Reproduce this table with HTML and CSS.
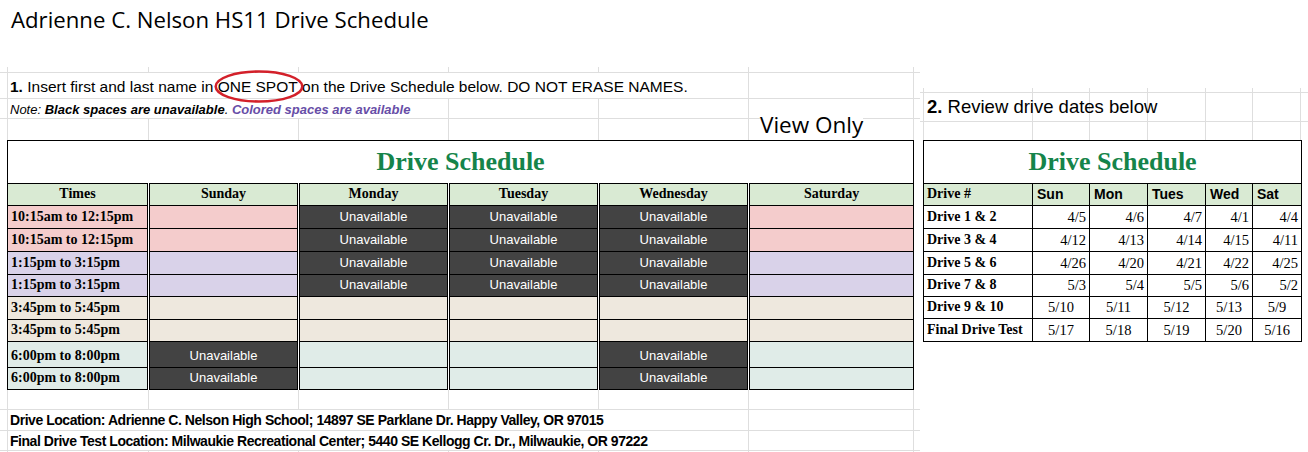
FILE: index.html
```html
<!DOCTYPE html>
<html lang="en">
<head>
<meta charset="utf-8">
<title>Adrienne C. Nelson HS11 Drive Schedule</title>
<link rel="stylesheet" href="styles.css">
</head>
<body>
<header class="doc-head">
  <h1 class="doc-title">Adrienne C. Nelson HS11 Drive Schedule</h1>
</header>
<main class="sheets">
  <section class="sheet sheet-left">
    <div class="srow strip"></div>
    <div class="srow step-row">
      <p class="step cover-wide"><b>1.</b> Insert first and last name in <span class="spot">ONE SPOT<svg class="ring" viewBox="0 0 90 33" width="90" height="33" aria-hidden="true"><ellipse cx="45" cy="16.5" rx="43.3" ry="15" fill="none" stroke="#d3202a" stroke-width="2.6"/></svg></span> on the Drive Schedule below. DO NOT ERASE NAMES.</p>
    </div>
    <div class="srow note-row">
      <p class="note cover-note"><i>Note: <b>Black spaces are unavailable</b>. <b class="purple">Colored spaces are available</b></i></p>
    </div>
    <div class="srow view-row"><span class="view-only">View Only</span></div>

    <table class="sched">
      <colgroup>
        <col class="c-times"><col class="c-day"><col class="c-day"><col class="c-day"><col class="c-day"><col class="c-sat">
      </colgroup>
      <tr class="t-title"><td colspan="6">Drive Schedule</td></tr>
      <tr class="t-head"><th>Times</th><th>Sunday</th><th>Monday</th><th>Tuesday</th><th>Wednesday</th><th>Saturday</th></tr>
      <tr class="pink"><th>10:15am to 12:15pm</th><td></td><td class="na">Unavailable</td><td class="na">Unavailable</td><td class="na">Unavailable</td><td></td></tr>
      <tr class="pink"><th>10:15am to 12:15pm</th><td></td><td class="na">Unavailable</td><td class="na">Unavailable</td><td class="na">Unavailable</td><td></td></tr>
      <tr class="lav"><th>1:15pm to 3:15pm</th><td></td><td class="na">Unavailable</td><td class="na">Unavailable</td><td class="na">Unavailable</td><td></td></tr>
      <tr class="lav h22"><th>1:15pm to 3:15pm</th><td></td><td class="na">Unavailable</td><td class="na">Unavailable</td><td class="na">Unavailable</td><td></td></tr>
      <tr class="beige"><th>3:45pm to 5:45pm</th><td></td><td></td><td></td><td></td><td></td></tr>
      <tr class="beige h22"><th>3:45pm to 5:45pm</th><td></td><td></td><td></td><td></td><td></td></tr>
      <tr class="mint tall"><th>6:00pm to 8:00pm</th><td class="na">Unavailable</td><td></td><td></td><td class="na">Unavailable</td><td></td></tr>
      <tr class="mint h22"><th>6:00pm to 8:00pm</th><td class="na">Unavailable</td><td></td><td></td><td class="na">Unavailable</td><td></td></tr>
    </table>

    <div class="srow gap-row"></div>
    <div class="srow foot-row"><p class="foot cover-wide">Drive Location: Adrienne C. Nelson High School; 14897 SE Parklane Dr. Happy Valley, OR 97015</p></div>
    <div class="srow foot-row last"><p class="foot cover-wide">Final Drive Test Location: Milwaukie Recreational Center; 5440 SE Kellogg Cr. Dr., Milwaukie, OR 97222</p></div>
  </section>

  <section class="sheet sheet-right">
    <div class="srow rstrip"></div>
    <div class="srow review-row"><p class="review"><b>2.</b> Review drive dates below</p></div>
    <div class="srow rgap"></div>
    <table class="dates">
      <colgroup>
        <col class="d-name"><col class="d-57"><col class="d-58"><col class="d-58"><col class="d-47"><col class="d-49">
      </colgroup>
      <tr class="t-title"><td colspan="6">Drive Schedule</td></tr>
      <tr class="d-head"><th class="serif">Drive #</th><th>Sun</th><th>Mon</th><th>Tues</th><th>Wed</th><th>Sat</th></tr>
      <tr><th>Drive 1 &amp; 2</th><td>4/5</td><td>4/6</td><td>4/7</td><td>4/1</td><td>4/4</td></tr>
      <tr><th>Drive 3 &amp; 4</th><td>4/12</td><td>4/13</td><td>4/14</td><td>4/15</td><td>4/11</td></tr>
      <tr><th>Drive 5 &amp; 6</th><td>4/26</td><td>4/20</td><td>4/21</td><td>4/22</td><td>4/25</td></tr>
      <tr class="h22"><th>Drive 7 &amp; 8</th><td>5/3</td><td>5/4</td><td>5/5</td><td>5/6</td><td>5/2</td></tr>
      <tr class="mid h22"><th>Drive 9 &amp; 10</th><td>5/10</td><td>5/11</td><td>5/12</td><td>5/13</td><td>5/9</td></tr>
      <tr class="mid"><th>Final Drive Test</th><td>5/17</td><td>5/18</td><td>5/19</td><td>5/20</td><td>5/16</td></tr>
    </table>
  </section>
</main>
</body>
</html>
```

FILE: styles.css
```css
* { box-sizing: border-box; margin: 0; padding: 0; }

html, body { background: #fff; }

body {
  width: 1308px;
  height: 452px;
  overflow: hidden;
  font-family: "Liberation Sans", Arial, sans-serif;
  color: #000;
}

/* ---------- document title ---------- */
.doc-head {
  height: 67px;
  padding: 5px 0 0 11px;
}
.doc-title {
  font-family: "Open Sans", "Noto Sans", sans-serif;
  font-weight: 400;
  font-size: 22.2px;
  line-height: 30px;
}

/* ---------- sheets ---------- */
.sheets {
  display: flex;
  align-items: flex-start;
}

.srow {
  border-bottom: 1px solid #dedede;
}

.sheet-left {
  width: 920px;
  height: 385px;
  background:
    linear-gradient(#dedede, #dedede) 7px 0 / 1px 100% no-repeat,
    linear-gradient(#dedede, #dedede) 148px 0 / 1px 100% no-repeat,
    linear-gradient(#dedede, #dedede) 298px 0 / 1px 100% no-repeat,
    linear-gradient(#dedede, #dedede) 448px 0 / 1px 100% no-repeat,
    linear-gradient(#dedede, #dedede) 598px 0 / 1px 100% no-repeat,
    linear-gradient(#dedede, #dedede) 748px 0 / 1px 100% no-repeat,
    linear-gradient(#dedede, #dedede) 913px 0 / 1px 100% no-repeat;
}

.strip { height: 6px; }
.step-row { height: 26px; }
.note-row { height: 20px; }
.view-row { height: 21px; border-bottom: 0; }
.gap-row { height: 20px; }
.foot-row { height: 21px; }
.foot-row.last { height: 20px; }

.cover-wide,
.cover-note {
  height: 100%;
  margin-left: 8px;
  padding-left: 2px;
  background: #fff;
  white-space: nowrap;
}
.cover-wide { width: 740px; }
.cover-note { width: 440px; }

.step {
  font-size: 15.5px;
  line-height: 22px;
  padding-top: 3px;
}
.spot {
  position: relative;
}
.ring {
  position: absolute;
  left: -4px;
  top: -8px;
  overflow: visible;
}

.note {
  font-size: 13px;
  line-height: 19px;
  padding-top: 1px;
}
.purple { color: #674ea7; }

.view-only {
  display: inline-block;
  margin: -7px 0 0 760px;
  font-family: "Open Sans", "Noto Sans", sans-serif;
  font-size: 22.5px;
  line-height: 24px;
  background: #fff;
}

.foot {
  font-family: "Liberation Sans", Arial, sans-serif;
  font-weight: 700;
  font-size: 14px;
  letter-spacing: -0.46px;
  line-height: 20px;
}

/* ---------- schedule table ---------- */
.sched, .dates {
  border-collapse: collapse;
  table-layout: fixed;
  background: #fff;
  border: 1px solid #000;
}
.sched {
  margin-left: 7px;
  width: 906px;
}
.c-times { width: 141px; }
.c-day { width: 150px; }
.c-sat { width: 165px; }

.sched td, .sched th {
  border-top: 1px solid #000;
  border-bottom: 1px solid #000;
  border-left: 3px double #000;
  height: 23px;
  padding: 0 3px 2px;
  vertical-align: bottom;
  line-height: 18px;
  white-space: nowrap;
  overflow: hidden;
}
.sched tr > :first-child { border-left: 1px solid #000; }
.sched tr.h22 > * { height: 22px; }
.sched tr.tall > * { height: 26px; }

.sched th {
  font-family: "Liberation Serif", "Times New Roman", serif;
  font-weight: 700;
  font-size: 14px;
  text-align: left;
}

.sched td {
  font-size: 13px;
  text-align: center;
}

.sched tr.t-head th {
  height: 22px;
  background: #d9ead3;
  text-align: center;
}

.sched tr.t-title td,
.dates tr.t-title td {
  height: 43px;
  border-left: 1px solid #000;
  text-align: center;
  vertical-align: middle;
  font-family: "Liberation Serif", "Times New Roman", serif;
  font-weight: 700;
  font-size: 26px;
  line-height: 30px;
  color: #15844a;
  background: #fff;
  padding: 0;
}

.pink > * { background: #f4cccc; }
.lav > * { background: #d9d2e9; }
.beige > * { background: #eee8de; }
.mint > * { background: #e0ece8; }
.sched td.na {
  background: #434343;
  color: #fff;
}

/* ---------- right sheet ---------- */
.sheet-right {
  width: 388px;
  height: 253px;
  margin-top: 21px;
  background:
    linear-gradient(#dedede, #dedede) 3px 0 / 1px 100% no-repeat,
    linear-gradient(#dedede, #dedede) 112px 0 / 1px 100% no-repeat,
    linear-gradient(#dedede, #dedede) 169px 0 / 1px 100% no-repeat,
    linear-gradient(#dedede, #dedede) 227px 0 / 1px 100% no-repeat,
    linear-gradient(#dedede, #dedede) 285px 0 / 1px 100% no-repeat,
    linear-gradient(#dedede, #dedede) 332px 0 / 1px 100% no-repeat,
    linear-gradient(#dedede, #dedede) 380px 0 / 1px 100% no-repeat;
}
.rstrip { height: 5px; }
.review-row { height: 29px; }
.rgap { height: 18px; border-bottom: 0; }

.review {
  padding-left: 7px;
  font-size: 18.5px;
  line-height: 28px;
  white-space: nowrap;
}

.dates {
  margin-left: 3px;
  width: 378px;
}
.d-name { width: 109px; }
.d-57 { width: 57px; }
.d-58 { width: 58px; }
.d-47 { width: 47px; }
.d-49 { width: 49px; }

.dates td, .dates th {
  border: 1px solid #000;
  height: 23px;
  padding: 0 3px 2px;
  vertical-align: bottom;
  line-height: 18px;
  white-space: nowrap;
  overflow: hidden;
}
.dates tr.h22 > * { height: 22px; }

.dates th {
  font-family: "Liberation Serif", "Times New Roman", serif;
  font-weight: 700;
  font-size: 14px;
  text-align: left;
}
.dates td {
  font-family: "Liberation Serif", "Times New Roman", serif;
  font-size: 14.5px;
  text-align: right;
}
.dates tr.mid td { text-align: center; }

.dates tr.d-head th {
  height: 22px;
  background: #d9ead3;
  font-family: "Liberation Sans", Arial, sans-serif;
  font-size: 14px;
  padding-left: 4px;
}
.dates tr.d-head th.serif {
  font-family: "Liberation Serif", "Times New Roman", serif;
  padding-left: 3px;
}
```
